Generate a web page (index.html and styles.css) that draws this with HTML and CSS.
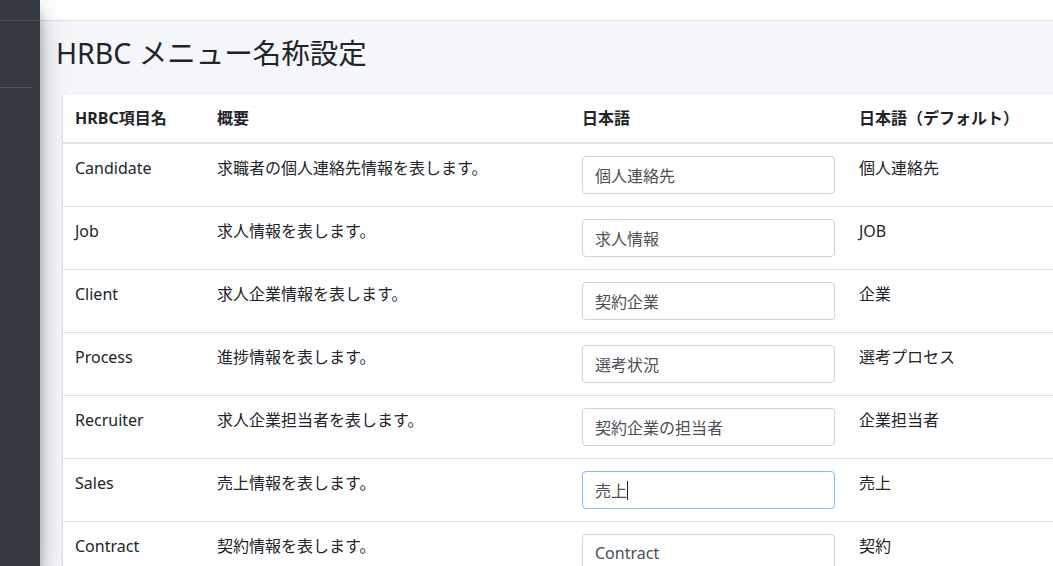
FILE: index.html
```html
<!DOCTYPE html>
<html lang="ja">
<head>
<meta charset="utf-8">
<title>HRBC メニュー名称設定</title>
<link rel="stylesheet" href="styles.css">
</head>
<body>
<div class="wrapper">
  <aside class="sidebar">
    <div class="sb-brand"></div>
    <div class="sb-panel"></div>
  </aside>
  <div class="main">
    <nav class="navbar"></nav>
    <div class="content">
      <h1 class="page-title">HRBC メニュー名称設定</h1>
      <div class="card">
        <table class="table">
          <colgroup>
            <col class="c1"><col class="c2"><col class="c3"><col class="c4">
          </colgroup>
          <thead>
            <tr><th>HRBC項目名</th><th>概要</th><th>日本語</th><th>日本語（デフォルト）</th></tr>
          </thead>
          <tbody>
            <tr><td>Candidate</td><td>求職者の個人連絡先情報を表します。</td><td><input class="form-control" value="個人連絡先"></td><td>個人連絡先</td></tr>
            <tr><td>Job</td><td>求人情報を表します。</td><td><input class="form-control" value="求人情報"></td><td>JOB</td></tr>
            <tr><td>Client</td><td>求人企業情報を表します。</td><td><input class="form-control" value="契約企業"></td><td>企業</td></tr>
            <tr><td>Process</td><td>進捗情報を表します。</td><td><input class="form-control" value="選考状況"></td><td>選考プロセス</td></tr>
            <tr><td>Recruiter</td><td>求人企業担当者を表します。</td><td><input class="form-control" value="契約企業の担当者"></td><td>企業担当者</td></tr>
            <tr><td>Sales</td><td>売上情報を表します。</td><td><div class="input-wrap"><input class="form-control focus" value="売上"><span class="caret"></span></div></td><td>売上</td></tr>
            <tr><td>Contract</td><td>契約情報を表します。</td><td><input class="form-control" value="Contract"></td><td>契約</td></tr>
          </tbody>
        </table>
      </div>
    </div>
  </div>
</div>
</body>
</html>
```

FILE: styles.css
```css
html, body {
  margin: 0;
  padding: 0;
  height: 100%;
  overflow: hidden;
}
body {
  font-family: "Noto Sans", "Noto Sans CJK JP", sans-serif;
  font-size: 16px;
  color: #212529;
  background: #f4f6f9;
}
.wrapper {
  display: flex;
  height: 100vh;
}
.sidebar {
  width: 40px;
  flex-shrink: 0;
  background: #343a40;
  box-shadow: 0 14px 28px rgba(0,0,0,.25), 0 10px 10px rgba(0,0,0,.22);
  position: relative;
  z-index: 2;
}
.sb-brand {
  height: 20px;
  border-bottom: 1px solid #4b545c;
}
.sb-panel {
  height: 66px;
  margin-right: 8px;
  border-bottom: 1px solid #4f5962;
}
.main {
  flex: 1;
  min-width: 0;
  display: flex;
  flex-direction: column;
  background: #f4f6f9;
}
.navbar {
  height: 20px;
  background: #fff;
  border-bottom: 1px solid #dee2e6;
  flex-shrink: 0;
}
.content {
  padding: 0 0 0 16px;
  overflow: hidden;
}
.page-title {
  margin: 15px 0 24px 0;
  font-size: 28.5px;
  font-weight: 400;
  line-height: 34px;
  color: #212529;
}
.card {
  margin-left: 7px;
  width: 1150px;
  background: #fff;
  border-radius: 4px;
  box-shadow: 0 0 1px rgba(0,0,0,.125), 0 1px 3px rgba(0,0,0,.2);
}
.table {
  width: 100%;
  border-collapse: collapse;
  table-layout: fixed;
}
.c1 { width: 142px; }
.c2 { width: 365px; }
.c3 { width: 277px; }
.table th {
  text-align: left;
  font-weight: 700;
  padding: 12px;
  line-height: 24px;
  border-bottom: 2px solid #dee2e6;
  white-space: nowrap;
}
.table td {
  padding: 12px;
  line-height: 24px;
  vertical-align: top;
  border-top: 1px solid #dee2e6;
  white-space: nowrap;
}
.form-control {
  display: block;
  width: 100%;
  height: 38px;
  box-sizing: border-box;
  padding: 6px 12px;
  font-family: "Noto Sans", "Noto Sans CJK JP", sans-serif;
  font-size: 16px;
  color: #495057;
  background: #fff;
  border: 1px solid #ced4da;
  border-radius: 4px;
  outline: none;
}
.form-control.focus {
  border-color: #80bdff;
}
.input-wrap {
  position: relative;
}
.caret {
  position: absolute;
  left: 45px;
  top: 10px;
  width: 1px;
  height: 19px;
  background: #212529;
}
```
